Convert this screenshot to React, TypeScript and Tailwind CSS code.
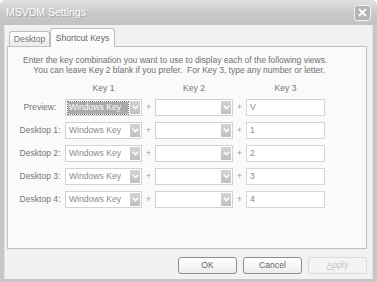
import React from 'react';

const rows = [
  { label: 'Preview:', key3: 'V', active: true },
  { label: 'Desktop 1:', key3: '1' },
  { label: 'Desktop 2:', key3: '2' },
  { label: 'Desktop 3:', key3: '3' },
  { label: 'Desktop 4:', key3: '4' }
];

function Arrow() {
  return (
    <div className="w-[11px] h-full bg-gradient-to-b from-[#d4d4d4] to-[#c0c0c0] border-l border-white flex items-center justify-center">
      <svg width="7" height="5" viewBox="0 0 7 5">
        <path d="M0.8 0.8 L3.5 3.6 L6.2 0.8" fill="none" stroke="#fff" strokeWidth="1.5" />
      </svg>
    </div>
  );
}

function Combo({ text, active }: { text?: string; active?: boolean }) {
  return (
    <div className="h-[17px] border border-[#d2d2d2] bg-white flex items-stretch p-[1px]">
      <div className="flex-1 flex items-center min-w-0">
        {text &&
          (active ? (
            <span className="ml-[1px] h-[12px] w-[60px] flex items-center bg-[#ababab] outline-1 outline-dotted outline-[#7a7a7a] text-white pl-[1px] leading-none whitespace-nowrap">
              {text}
            </span>
          ) : (
            <span className="pl-[2px] text-[#8a8a8a] leading-none whitespace-nowrap">{text}</span>
          ))}
      </div>
      <Arrow />
    </div>
  );
}

export default function App() {
  return (
    <div
      className="w-[377px] h-[282px] flex flex-col bg-[#c6c6c6] overflow-hidden rounded-t-[6px] text-[8.6px]"
      style={{ fontFamily: '"Liberation Sans", Arial, sans-serif' }}
    >
      <div className="h-[25px] shrink-0 flex items-center justify-between pl-[6px] pr-[6px] bg-gradient-to-b from-[#e2e2e2] via-[#cacaca] to-[#c2c2c2]">
        <span className="text-[10.5px] text-white [text-shadow:1px_1px_0_#a5a5a5]">MSVDM Settings</span>
        <div className="w-[17px] h-[16px] rounded-[3px] bg-[#b4b4b4] border border-[#f2f2f2] flex items-center justify-center">
          <svg width="9" height="9" viewBox="0 0 9 9">
            <path d="M1 1 L8 8 M8 1 L1 8" stroke="#fff" strokeWidth="1.8" />
          </svg>
        </div>
      </div>
      <div className="flex-1 mx-[4px] mb-[3px] bg-[#f1f1f1] border-l border-r border-[#e2e2e2] flex flex-col pl-[2px] pr-[5px] pt-[3px]">
        <div className="flex items-end h-[18px] pl-[2px] relative z-10">
          <div className="h-[15px] w-[41px] border border-b-0 border-[#bcbcbc] rounded-t-[3px] bg-gradient-to-b from-white to-[#ececec] flex items-center justify-center text-[#777]">
            Desktop
          </div>
          <div className="h-[19px] w-[65px] -mb-[1px] border border-b-0 border-[#bcbcbc] rounded-t-[3px] bg-[#fbfbfb] flex items-start pt-[3px] justify-center text-[#666]">
            Shortcut Keys
          </div>
        </div>
        <div className="h-[203px] border border-[#c0c0c0] bg-[#fafafa] flex flex-col pt-[8px]">
          <div className="w-[302px] ml-[15px] text-[#707070] leading-[10px] text-right text-[8.5px] whitespace-nowrap">
            <div>Enter the key combination you want to use to display each of the following views.</div>
            <div>You can leave Key 2 blank if you prefer.&nbsp; For Key 3, type any number or letter.</div>
          </div>
          <div className="ml-[9px] mt-[8px] grid grid-cols-[48px_77px_13px_78px_13px_79px] gap-y-[6px] items-center text-[#777]">
            <div />
            <div className="text-center leading-[10px]">Key 1</div>
            <div />
            <div className="text-center leading-[10px]">Key 2</div>
            <div />
            <div className="text-center leading-[10px]">Key 3</div>
            {rows.map(r => (
              <React.Fragment key={r.label}>
                <div className="text-center pr-[2px] whitespace-nowrap">{r.label}</div>
                <Combo text="Windows Key" active={r.active} />
                <div className="text-center text-[#999]">+</div>
                <Combo />
                <div className="text-center text-[#999]">+</div>
                <div className="h-[17px] border border-[#d6d6d6] bg-white flex items-center pl-[3px] text-[#8a8a8a]">
                  {r.key3}
                </div>
              </React.Fragment>
            ))}
          </div>
        </div>
        <div className="flex justify-end gap-[6px] mt-[8px]">
          <button className="w-[59px] h-[17px] rounded-[3px] border border-[#8e8e8e] bg-gradient-to-b from-white to-[#ececec] text-[#666]">
            OK
          </button>
          <button className="w-[59px] h-[17px] rounded-[3px] border border-[#8e8e8e] bg-gradient-to-b from-white to-[#ececec] text-[#666]">
            Cancel
          </button>
          <button className="w-[59px] h-[17px] rounded-[3px] border border-[#dadada] bg-[#f4f4f4] text-[#c4c4c4]">
            <span className="underline">A</span>pply
          </button>
        </div>
      </div>
    </div>
  );
}
